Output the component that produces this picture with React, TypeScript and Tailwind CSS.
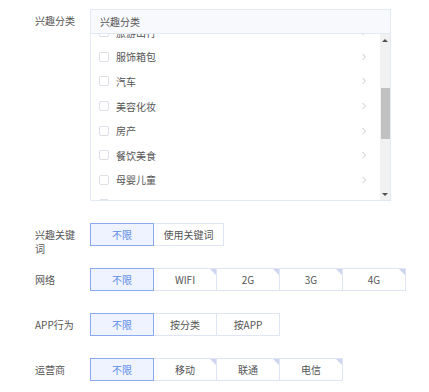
import React from 'react';

const categories = ['旅游出行', '服饰箱包', '汽车', '美容化妆', '房产', '餐饮美食', '母婴儿童', '科技数码'];

const rows: { label: string; options: string[]; corner: boolean; first?: number }[] = [
  { label: '兴趣关键词', options: ['不限', '使用关键词'], corner: false },
  { label: '网络', options: ['不限', 'WIFI', '2G', '3G', '4G'], corner: true },
  { label: 'APP行为', options: ['不限', '按分类', '按APP'], corner: false },
  { label: '运营商', options: ['不限', '移动', '联通', '电信'], corner: true },
];

const Chevron = () => (
  <svg width="6" height="8" viewBox="0 0 6 8" fill="none">
    <path d="M1.5 1L4.5 4L1.5 7" stroke="#c4c8d0" strokeWidth="1" />
  </svg>
);

export default function App() {
  return (
    <div
      className="w-[429px] h-[392px] bg-white pl-[35px] pt-[9px] text-[10px] text-[#555]"
      style={{ fontFamily: '"Noto Sans CJK SC", "Noto Sans", sans-serif' }}
    >
      {/* Interest category */}
      <div className="flex">
        <div className="w-[55px] h-[24px] leading-[24px] text-[#555]">兴趣分类</div>
        <div className="w-[301px] h-[192px] border border-[#e3e8f5] flex flex-col">
          <div className="h-[24px] shrink-0 bg-[#f8f9fd] border-b border-[#e3e8f5] px-[9px] leading-[23px] text-[#555]">
            兴趣分类
          </div>
          <div className="flex flex-1 overflow-hidden">
            <div className="flex-1 overflow-hidden">
              <div className="mt-[-14px]">
                {categories.map((c) => (
                  <div key={c} className="h-[24.6px] flex items-center pl-[8px] pr-[13px]">
                    <span className="w-[10px] h-[10px] border border-[#dcdfe8] rounded-[2px] bg-white" />
                    <span className="ml-[7px] flex-1 text-[#555]">{c}</span>
                    <Chevron />
                  </div>
                ))}
              </div>
            </div>
            {/* scrollbar */}
            <div className="w-[10px] bg-[#f1f1f1] flex flex-col items-center">
              <div className="h-[12px] flex items-center justify-center">
                <span className="w-0 h-0 border-l-[3px] border-r-[3px] border-b-[3px] border-l-transparent border-r-transparent border-b-[#505050]" />
              </div>
              <div className="h-[42px]" />
              <div className="w-[9px] h-[51px] bg-[#c1c1c1]" />
              <div className="flex-1" />
              <div className="h-[12px] flex items-center justify-center">
                <span className="w-0 h-0 border-l-[3px] border-r-[3px] border-t-[3px] border-l-transparent border-r-transparent border-t-[#505050]" />
              </div>
            </div>
          </div>
        </div>
      </div>

      <div className="mt-[22px]">
        {rows.map((row) => (
          <div key={row.label} className="flex items-start h-[45px]">
            <div className="w-[55px] pr-[13px] pt-[4.5px] leading-[14px] text-[#555]">{row.label}</div>
            <div className="flex">
              {row.options.map((o, i) => {
                const selected = i === 0;
                const wide = o === '使用关键词';
                return (
                  <div
                    key={o}
                    className={`relative h-[23px] flex items-center justify-center border ${
                      i > 0 ? '-ml-px' : ''
                    } ${wide ? 'w-[71px]' : 'w-[64px]'} ${
                      selected
                        ? 'z-10 border-[#8aaaf0] bg-[#eef3ff] text-[#5b8be8]'
                        : 'border-[#e0e5f3] bg-white text-[#555]'
                    }`}
                  >
                    {o}
                    {row.corner && !selected && (
                      <span className="absolute top-0 right-0 w-[6px] h-[6px] bg-[#cdd6ee] [clip-path:polygon(0_0,100%_0,100%_100%)]" />
                    )}
                  </div>
                );
              })}
            </div>
          </div>
        ))}
      </div>
    </div>
  );
}
